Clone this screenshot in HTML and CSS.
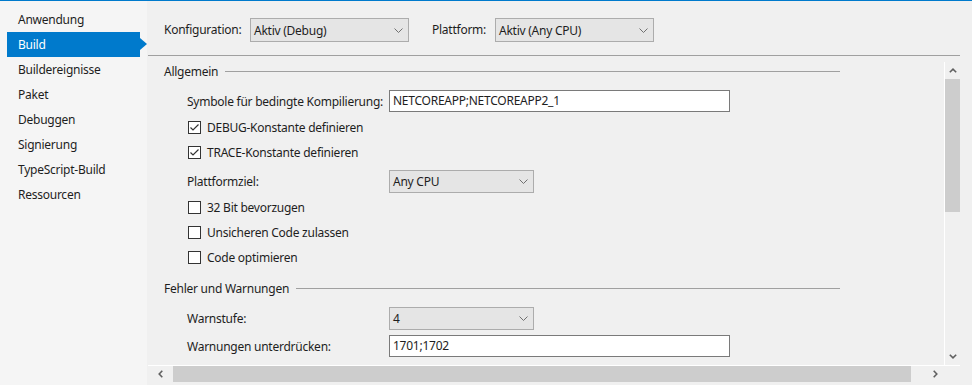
FILE: index.html
```html
<!DOCTYPE html>
<html lang="de">
<head>
    <meta charset="UTF-8">
    <meta name="viewport" content="width=device-width, initial-scale=1.0">
    <title>Build</title>
    <link rel="stylesheet" href="styles.css">
</head>
<body>
    <div class="window">
        <nav class="nav">
            <div class="nav-item">Anwendung</div>
            <div class="nav-item active">Build</div>
            <div class="nav-item">Buildereignisse</div>
            <div class="nav-item">Paket</div>
            <div class="nav-item">Debuggen</div>
            <div class="nav-item">Signierung</div>
            <div class="nav-item">TypeScript-Build</div>
            <div class="nav-item">Ressourcen</div>
        </nav>

        <main class="main">
            <div class="toolbar">
                <span class="tb-label cfg-label">Konfiguration:</span>
                <div class="select wide">
                    <span>Aktiv (Debug)</span>
                    <svg class="chev" width="9" height="5" viewBox="0 0 9 5"><polyline points="0.5,0.5 4.5,4.5 8.5,0.5" fill="none" stroke="#707070" stroke-width="1"/></svg>
                </div>
                <span class="tb-label plat-label">Plattform:</span>
                <div class="select wide">
                    <span>Aktiv (Any CPU)</span>
                    <svg class="chev" width="9" height="5" viewBox="0 0 9 5"><polyline points="0.5,0.5 4.5,4.5 8.5,0.5" fill="none" stroke="#707070" stroke-width="1"/></svg>
                </div>
            </div>

            <div class="pane">
                <div class="viewport">
                    <div class="content">
                        <div class="section">
                            <span>Allgemein</span>
                            <div class="rule"></div>
                        </div>
                        <div class="group">
                            <div class="field-row">
                                <span class="label">Symbole für bedingte Kompilierung:</span>
                                <div class="textbox">NETCOREAPP;NETCOREAPP2_1</div>
                            </div>
                            <div class="check-row">
                                <span class="box"><svg width="11" height="11" viewBox="0 0 11 11"><polyline points="1.5,5.5 4,8 9.5,2.5" fill="none" stroke="#333" stroke-width="1.2"/></svg></span>
                                <span>DEBUG-Konstante definieren</span>
                            </div>
                            <div class="check-row">
                                <span class="box"><svg width="11" height="11" viewBox="0 0 11 11"><polyline points="1.5,5.5 4,8 9.5,2.5" fill="none" stroke="#333" stroke-width="1.2"/></svg></span>
                                <span>TRACE-Konstante definieren</span>
                            </div>
                            <div class="field-row after-checks">
                                <span class="label">Plattformziel:</span>
                                <div class="select narrow">
                                    <span>Any CPU</span>
                                    <svg class="chev" width="9" height="5" viewBox="0 0 9 5"><polyline points="0.5,0.5 4.5,4.5 8.5,0.5" fill="none" stroke="#707070" stroke-width="1"/></svg>
                                </div>
                            </div>
                            <div class="check-row">
                                <span class="box"></span>
                                <span>32 Bit bevorzugen</span>
                            </div>
                            <div class="check-row">
                                <span class="box"></span>
                                <span>Unsicheren Code zulassen</span>
                            </div>
                            <div class="check-row">
                                <span class="box"></span>
                                <span>Code optimieren</span>
                            </div>
                        </div>

                        <div class="section second">
                            <span>Fehler und Warnungen</span>
                            <div class="rule"></div>
                        </div>
                        <div class="group">
                            <div class="field-row">
                                <span class="label">Warnstufe:</span>
                                <div class="select narrow">
                                    <span>4</span>
                                    <svg class="chev" width="9" height="5" viewBox="0 0 9 5"><polyline points="0.5,0.5 4.5,4.5 8.5,0.5" fill="none" stroke="#707070" stroke-width="1"/></svg>
                                </div>
                            </div>
                            <div class="field-row">
                                <span class="label">Warnungen unterdrücken:</span>
                                <div class="textbox">1701;1702</div>
                            </div>
                        </div>
                    </div>

                    <div class="vscroll">
                        <div class="sb-btn up">
                            <svg width="8" height="5" viewBox="0 0 8 5"><polyline points="0.8,4.3 4,1.2 7.2,4.3" fill="none" stroke="#606060" stroke-width="1.6"/></svg>
                        </div>
                        <div class="v-track"><div class="v-thumb"></div></div>
                        <div class="sb-btn down">
                            <svg width="8" height="5" viewBox="0 0 8 5"><polyline points="0.8,0.7 4,3.8 7.2,0.7" fill="none" stroke="#606060" stroke-width="1.6"/></svg>
                        </div>
                    </div>
                </div>

                <div class="hscroll">
                    <div class="sb-btn left">
                        <svg width="5" height="8" viewBox="0 0 5 8"><polyline points="4.3,0.8 1.2,4 4.3,7.2" fill="none" stroke="#606060" stroke-width="1.6"/></svg>
                    </div>
                    <div class="h-track"><div class="h-thumb"></div></div>
                    <div class="sb-btn right">
                        <svg width="5" height="8" viewBox="0 0 5 8"><polyline points="0.7,0.8 3.8,4 0.7,7.2" fill="none" stroke="#606060" stroke-width="1.6"/></svg>
                    </div>
                </div>
            </div>
        </main>
    </div>
</body>
</html>
```

FILE: styles.css
```css
body {
    margin: 0;
    padding: 0;
    font-family: "Segoe UI", "Noto Sans", "Open Sans", sans-serif;
    font-size: 12px;
    letter-spacing: -0.25px;
    color: #1e1e1e;
    background-color: #f0f0f0;
}
.window {
    display: flex;
    height: 384px;
    border-top: 1px solid #007acc;
    overflow: hidden;
}

/* left navigation */
.nav {
    width: 147px;
    flex-shrink: 0;
    background-color: #f5f5f5;
    padding-top: 6px;
    box-sizing: border-box;
}
.nav-item {
    position: relative;
    height: 25px;
    line-height: 25px;
    margin-left: 7px;
    margin-right: 7px;
    padding-left: 11px;
    white-space: nowrap;
}
.nav-item.active {
    background-color: #007acc;
    color: white;
}
.nav-item.active::after {
    content: "";
    position: absolute;
    right: -7px;
    top: 6px;
    border-left: 7px solid #007acc;
    border-top: 6.5px solid transparent;
    border-bottom: 6.5px solid transparent;
}

/* main area */
.main {
    flex: 1;
    display: flex;
    flex-direction: column;
    padding-left: 1px;
    padding-right: 12px;
    min-width: 0;
}
.toolbar {
    height: 55px;
    flex-shrink: 0;
    display: flex;
    align-items: flex-start;
    padding-top: 17px;
    padding-left: 16px;
    box-sizing: border-box;
    border-bottom: 1px solid #a0a0a0;
}
.tb-label {
    height: 24px;
    line-height: 24px;
    white-space: nowrap;
}
.cfg-label {
    width: 86px;
}
.plat-label {
    width: 63px;
    margin-left: 23px;
}
.select {
    display: flex;
    align-items: center;
    justify-content: space-between;
    box-sizing: border-box;
    background-color: #e5e5e5;
    border: 1px solid #acacac;
    padding-left: 3px;
    padding-right: 5px;
    white-space: nowrap;
}
.select.wide {
    width: 159px;
    height: 24px;
}
.select.narrow {
    width: 145px;
    height: 23px;
}
.chev {
    flex-shrink: 0;
}

/* scrollable pane */
.pane {
    flex: 1;
    display: flex;
    flex-direction: column;
    min-height: 0;
}
.viewport {
    height: 309px;
    display: flex;
    border-bottom: 1px solid #ffffff;
}
.content {
    flex: 1;
    padding-top: 6px;
    padding-left: 16px;
    padding-right: 104px;
    overflow: hidden;
}
.section {
    display: flex;
    align-items: center;
    height: 18px;
    margin-bottom: 7px;
    white-space: nowrap;
}
.section.second {
    margin-top: 9px;
}
.rule {
    flex: 1;
    height: 1px;
    margin-left: 7px;
    background-color: #a0a0a0;
}
.group {
    padding-left: 23px;
}
.field-row {
    display: flex;
    align-items: center;
    height: 28px;
}
.field-row.after-checks {
    margin-top: 2px;
}
.label {
    width: 202px;
    flex-shrink: 0;
    white-space: nowrap;
}
.textbox {
    width: 341px;
    height: 22px;
    line-height: 20px;
    box-sizing: border-box;
    background: white;
    border: 1px solid #7a7a7a;
    padding-left: 3px;
    white-space: nowrap;
}
.check-row {
    display: flex;
    align-items: center;
    height: 25px;
    padding-left: 1px;
    white-space: nowrap;
}
.box {
    width: 13px;
    height: 13px;
    box-sizing: border-box;
    border: 1px solid #333333;
    background: white;
    margin-right: 6px;
    display: flex;
    align-items: center;
    justify-content: center;
}

/* scrollbars */
.vscroll {
    width: 16px;
    flex-shrink: 0;
    margin-top: 6px;
    display: flex;
    flex-direction: column;
    border-left: 1px solid #ffffff;
    box-sizing: border-box;
}
.sb-btn {
    display: flex;
    align-items: center;
    justify-content: center;
    flex-shrink: 0;
}
.sb-btn.up {
    height: 17px;
}
.sb-btn.down {
    height: 17px;
}
.v-track {
    flex: 1;
}
.v-thumb {
    height: 133px;
    background-color: #cdcdcd;
}
.hscroll {
    display: flex;
    height: 16px;
    margin-right: 16px;
}
.sb-btn.left {
    width: 24px;
}
.sb-btn.right {
    width: 17px;
}
.h-track {
    flex: 1;
    padding-left: 1px;
}
.h-thumb {
    width: 738px;
    height: 16px;
    background-color: #cdcdcd;
}
```
